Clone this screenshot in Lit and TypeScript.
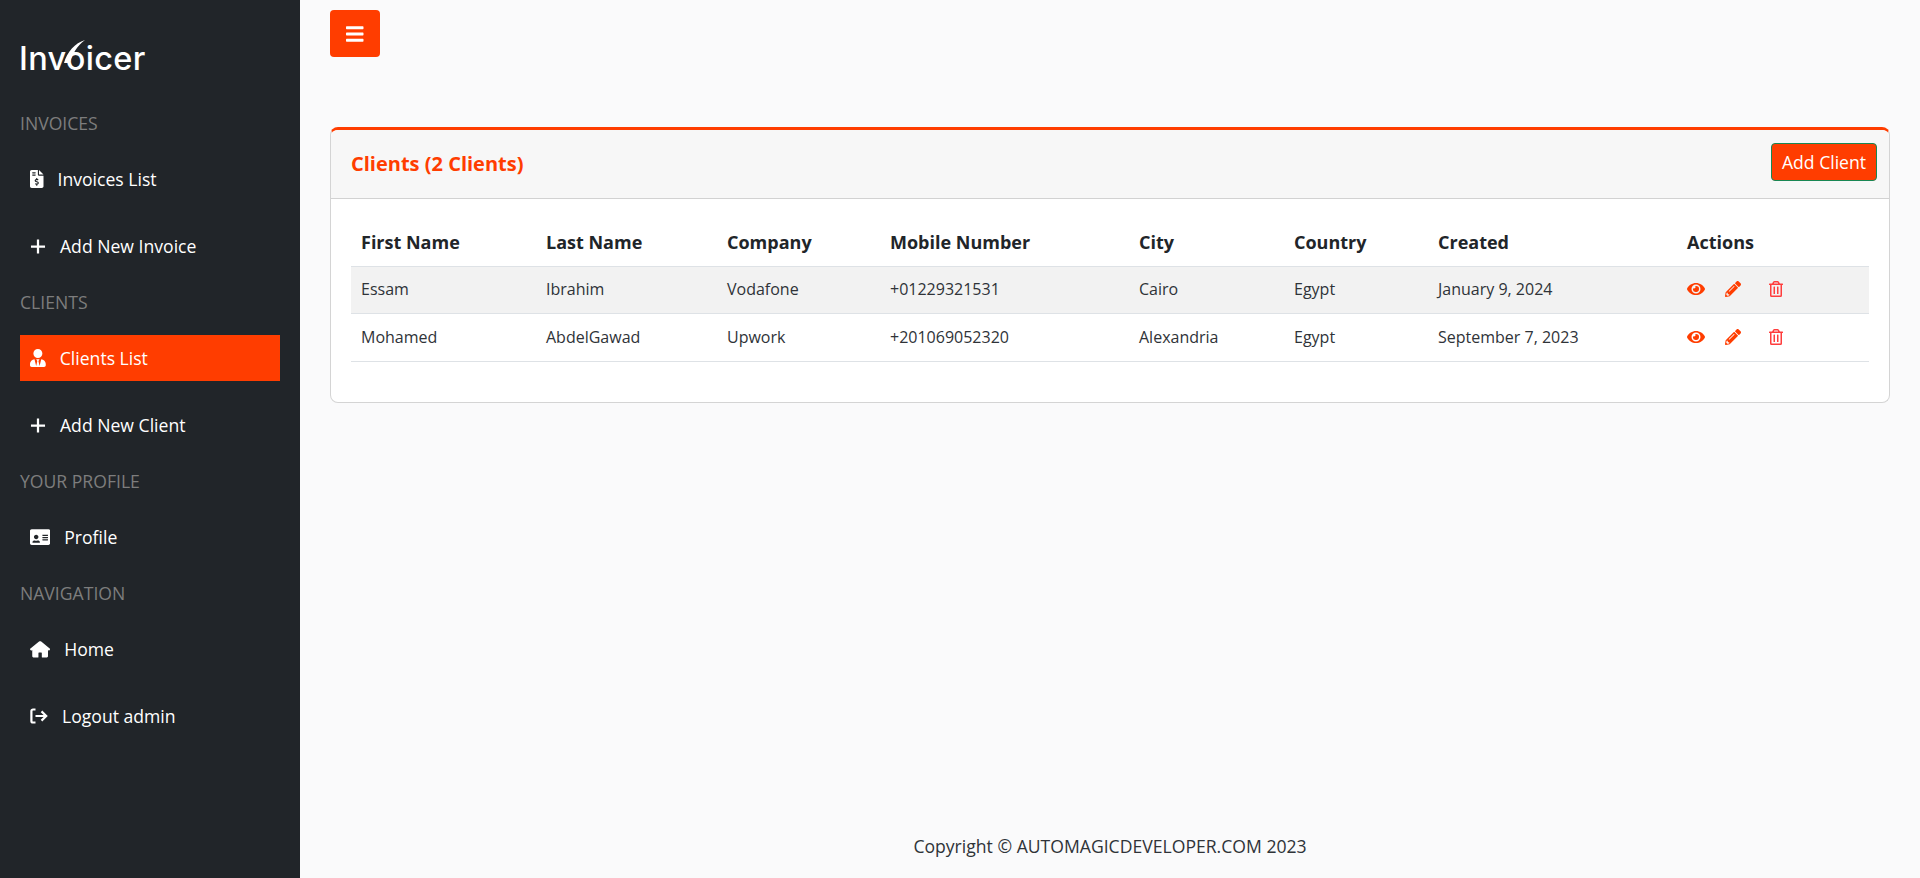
import { LitElement, html, css, svg } from 'lit';
import { customElement } from 'lit/decorators.js';

const ICONS = {
  invoice: { vb: '0 0 384 512', d: 'M48 0C21.5 0 0 21.500 0 48v416c0 26.500 21.500 48 48 48h288c26.500 0 48-21.500 48-48V160H248c-13.200 0-24-10.800-24-24V0H48zM256 0v128h128L256 0zM64 72c0-4.420 3.580-8 8-8h80c4.420 0 8 3.580 8 8v16c0 4.420-3.580 8-8 8H72c-4.420 0-8-3.580-8-8V72zM64 152v-16c0-4.420 3.580-8 8-8h80c4.420 0 8 3.580 8 8v16c0 4.420-3.580 8-8 8H72c-4.420 0-8-3.580-8-8zM208 415.880V440c0 4.420-3.580 8-8 8h-16c-4.420 0-8-3.580-8-8v-24.290c-11.290-.580-22.270-4.520-31.370-11.350-3.900-2.930-4.100-8.770-.570-12.140l11.750-11.210c2.770-2.640 6.890-2.760 10.130-.730 3.870 2.420 8.260 3.720 12.820 3.720h28.110c6.500 0 11.800-5.920 11.800-13.190 0-5.950-3.610-11.190-8.770-12.730l-45-13.500c-18.590-5.580-31.580-23.420-31.580-43.390 0-24.520 19.050-44.440 42.670-45.070V232c0-4.420 3.580-8 8-8h16c4.420 0 8 3.580 8 8v24.290c11.290.580 22.270 4.510 31.370 11.350 3.900 2.930 4.100 8.770.570 12.140l-11.750 11.210c-2.770 2.640-6.890 2.760-10.130.730-3.870-2.430-8.260-3.720-12.820-3.720h-28.110c-6.500 0-11.800 5.920-11.800 13.190 0 5.950 3.610 11.190 8.770 12.730l45 13.500c18.590 5.580 31.580 23.420 31.580 43.390 0 24.530-19.050 44.440-42.670 45.070z' },
  user: { vb: '0 0 448 512', d: 'M224 256c70.700 0 128-57.300 128-128S294.700 0 224 0 96 57.300 96 128s57.300 128 128 128zm95.800 32.600L272 480l-32-136 32-56h-96l32 56-32 136-47.800-191.400C56.900 292 0 350.300 0 422.400V464c0 26.500 21.500 48 48 48h352c26.500 0 48-21.500 48-48v-41.600c0-72.100-56.900-130.400-128.200-133.800z' },
  card: { vb: '0 0 576 512', d: 'M528 32H48C21.500 32 0 53.500 0 80v352c0 26.500 21.500 48 48 48h480c26.500 0 48-21.500 48-48V80c0-26.500-21.500-48-48-48zM352 200c0-4.400 3.600-8 8-8h144c4.400 0 8 3.600 8 8v16c0 4.400-3.600 8-8 8H360c-4.400 0-8-3.600-8-8v-16zM352 264c0-4.400 3.600-8 8-8h144c4.400 0 8 3.600 8 8v16c0 4.400-3.600 8-8 8H360c-4.400 0-8-3.600-8-8v-16zM352 328c0-4.400 3.600-8 8-8h144c4.400 0 8 3.600 8 8v16c0 4.400-3.600 8-8 8H360c-4.400 0-8-3.600-8-8v-16zM176 192c35.300 0 64 28.700 64 64s-28.700 64-64 64-64-28.700-64-64 28.700-64 64-64zM67.100 396.200C75.500 370.500 99.600 352 128 352h8.200c12.300 5.100 25.700 8 39.800 8s27.600-2.900 39.800-8h8.200c28.400 0 52.500 18.500 60.900 44.200 3.200 9.900-5.200 19.800-15.600 19.800H82.700c-10.400 0-18.800-10-15.600-19.800z' },
  home: { vb: '0 0 576 512', d: 'M288 32c-11 0-22 4-30.500 11L4.300 251.500a12 12 0 0 0-1.600 16.900l25.500 31c4 5 11.500 6 17 1.600L64 285V464a32 32 0 0 0 32 32h128a16 16 0 0 0 16-16V368a16 16 0 0 1 16-16h64a16 16 0 0 1 16 16v112a16 16 0 0 0 16 16h128a32 32 0 0 0 32-32V285l18.800 16c5.500 4.400 13 3.400 17-1.600l25.500-31a12 12 0 0 0-1.700-16.900L318.500 43C310 36 299 32 288 32z' },
  bars: { vb: '0 0 448 512', d: 'M16 132h416c8.837 0 16-7.163 16-16V76c0-8.837-7.163-16-16-16H16C7.163 60 0 67.163 0 76v40c0 8.837 7.163 16 16 16zm0 160h416c8.837 0 16-7.163 16-16v-40c0-8.837-7.163-16-16-16H16c-8.837 0-16 7.163-16 16v40c0 8.837 7.163 16 16 16zm0 160h416c8.837 0 16-7.163 16-16v-40c0-8.837-7.163-16-16-16H16c-8.837 0-16 7.163-16 16v40c0 8.837 7.163 16 16 16z' },
  eye: { vb: '0 0 576 512', d: 'M572.520 241.400C518.290 135.590 410.930 64 288 64S57.680 135.640 3.480 241.410a32.350 32.350 0 0 0 0 29.190C57.710 376.410 165.070 448 288 448s230.320-71.640 284.520-177.410a32.350 32.350 0 0 0 0-29.190zM288 400a144 144 0 1 1 144-144 143.930 143.930 0 0 1-144 144zm0-240a95.310 95.310 0 0 0-25.310 3.790 47.850 47.850 0 0 1-66.900 66.900A95.780 95.780 0 1 0 288 160z' },
  pencil: { vb: '0 0 512 512', d: 'M497.900 142.100l-46.100 46.100c-4.700 4.700-12.300 4.700-17 0l-111-111c-4.700-4.700-4.700-12.300 0-17l46.100-46.100c18.700-18.700 49.100-18.700 67.900 0l60.100 60.100c18.800 18.700 18.800 49.100 0 67.900zM284.200 99.800L21.600 362.400.4 483.900c-2.900 16.400 11.400 30.600 27.800 27.800l121.500-21.300 262.600-262.600c4.700-4.700 4.700-12.300 0-17l-111-111c-4.800-4.700-12.400-4.700-17.100 0zM124.100 339.900c-5.500-5.500-5.500-14.300 0-19.800l154-154c5.500-5.500 14.300-5.500 19.800 0s5.500 14.300 0 19.800l-154 154c-5.500 5.500-14.300 5.500-19.800 0zM88 424h48v36.300l-64.500 11.300-31.100-31.100L51.700 376H88v48z' },
  trash: { vb: '0 0 448 512', d: 'M268 416h24a12 12 0 0 0 12-12V188a12 12 0 0 0-12-12h-24a12 12 0 0 0-12 12v216a12 12 0 0 0 12 12zM432 80h-82.410l-34-56.700A48 48 0 0 0 274.410 0H173.590a48 48 0 0 0-41.160 23.300L98.410 80H16A16 16 0 0 0 0 96v16a16 16 0 0 0 16 16h16v336a48 48 0 0 0 48 48h288a48 48 0 0 0 48-48V128h16a16 16 0 0 0 16-16V96a16 16 0 0 0-16-16zM171.840 50.910A6 6 0 0 1 177 48h94a6 6 0 0 1 5.150 2.910L293.610 80H154.390zM368 464H80V128h288zm-212-48h24a12 12 0 0 0 12-12V188a12 12 0 0 0-12-12h-24a12 12 0 0 0-12 12v216a12 12 0 0 0 12 12z' },
};

type IconName = keyof typeof ICONS;

function icon(name: IconName, cls = '') {
  const i = ICONS[name];
  return html`<svg class="ico ${cls}" viewBox=${i.vb} fill="currentColor" fill-rule="evenodd" aria-hidden="true">${svg`<path d=${i.d}></path>`}</svg>`;
}

const plusIcon = html`<svg class="ico plus" viewBox="0 0 16 16" fill="none" stroke="currentColor" stroke-width="2.4"><path d="M8 .5v15M.5 8h15"></path></svg>`;
const logoutIcon = html`<svg class="ico logout" viewBox="0 0 18 18" fill="none" stroke="currentColor" stroke-width="2.2"><path d="M5.500 2.500H3a1.600 1.600 0 0 0-1.600 1.600v9.800A1.600 1.600 0 0 0 3 15.500h2.500"></path><path d="M5.500 9h10.800M11.500 4.400 16.200 9l-4.700 4.600"></path></svg>`;

const CLIENTS = [
  { first: 'Essam', last: 'Ibrahim', company: 'Vodafone', mobile: '+01229321531', city: 'Cairo', country: 'Egypt', created: 'January 9, 2024' },
  { first: 'Mohamed', last: 'AbdelGawad', company: 'Upwork', mobile: '+201069052320', city: 'Alexandria', country: 'Egypt', created: 'September 7, 2023' },
];

@customElement('app-root')
export class AppRoot extends LitElement {
  static styles = css`
    :host {
      display: block;
      font-family: 'Open Sans', sans-serif;
      color: #212529;
    }
    .layout { display: flex; min-height: 878px; background: #fafafb; }
    .sidebar {
      background: #212529;
      box-sizing: border-box;
      color: #fff;
      flex: 0 0 300px;
      padding: 0 20px;
    }
    .logo {
      box-sizing: border-box;
      color: #fff;
      font-family: 'Inter', sans-serif;
      font-size: 32.5px;
      font-weight: 500;
      height: 111px;
      letter-spacing: 0.3px;
      line-height: 39px;
      margin-left: -1px;
      padding-top: 39px;
      position: relative;
    }
    .swoosh { height: 26px; left: 41px; position: absolute; top: 39px; width: 26px; }
    .label {
      color: #7d7d7d;
      font-size: 17.6px;
      height: 24px;
      line-height: 24px;
      margin-bottom: 21px;
    }
    .item {
      align-items: center;
      box-sizing: border-box;
      display: flex;
      font-size: 17.6px;
      gap: 14px;
      height: 46px;
      margin-bottom: 21px;
      padding-left: 10px;
    }
    .item.active { background: #ff3d00; }
    .ico { display: block; height: 18px; flex: none; }
    .item .plus { height: 15px; width: 16px; }
    .item .logout { height: 18px; width: 18px; }
    .main {
      display: flex;
      flex: 1;
      flex-direction: column;
      min-width: 0;
      padding: 10px 30px 0;
    }
    .toggle {
      align-items: center;
      background: #ff3d00;
      border: none;
      border-radius: 4px;
      color: #fff;
      display: flex;
      height: 47px;
      justify-content: center;
      margin-bottom: 70px;
      padding: 0;
      width: 50px;
    }
    .toggle .ico { height: 20px; }
    .card {
      background: #fff;
      border: 1px solid #d4d4d4;
      border-top: 3px solid #ff3d00;
      border-radius: 8px;
    }
    .card-head {
      align-items: center;
      background: #f7f7f7;
      border-bottom: 1px solid #d2d2d2;
      border-radius: 8px 8px 0 0;
      display: flex;
      height: 68px;
      justify-content: space-between;
      padding: 0 12px 0 20px;
    }
    .card-head h2 {
      color: #ff3d00;
      font-size: 20px;
      font-weight: 700;
      margin: 0 0 2px;
    }
    .add {
      background: #ff3d00;
      border: 1px solid #198754;
      border-radius: 4px;
      color: #fff;
      font: 400 17.6px 'Open Sans', sans-serif;
      height: 38px;
      margin-bottom: 4px;
      padding: 0;
      width: 106px;
    }
    .card-body { padding: 19px 20px 40px; }
    table { border-collapse: collapse; font-size: 16px; table-layout: fixed; width: 100%; }
    th {
      border-bottom: 1px solid #dee2e6;
      box-sizing: border-box;
      font-size: 18px;
      font-weight: 700;
      height: 48px;
      padding: 0 10px;
      text-align: left;
    }
    td {
      border-bottom: 1px solid #dee2e6;
      box-sizing: border-box;
      color: #2f3338;
      height: 47.5px;
      padding: 0 10px 1px;
    }
    tbody tr:nth-child(odd) td { background: #f2f2f2; }
    th:nth-child(1) { width: 185px; }
    th:nth-child(2) { width: 181px; }
    th:nth-child(3) { width: 163px; }
    th:nth-child(4) { width: 249px; }
    th:nth-child(5) { width: 155px; }
    th:nth-child(6) { width: 144px; }
    th:nth-child(7) { width: 249px; }
    th:nth-child(8) { width: 192px; }
    .actions { align-items: center; display: flex; }
    .actions .ico { height: 16px; }
    .actions .eye { color: #ff3d00; margin-right: 20px; }
    .actions .pencil { color: #ff3d00; margin-right: 28px; }
    .actions .trash { color: #ff3d3d; }
    footer {
      color: #2f3338;
      font-size: 17.6px;
      line-height: 24px;
      margin-top: auto;
      padding-bottom: 20px;
      text-align: center;
    }
  `;

  private _item(ic: unknown, label: string, active = false) {
    return html`<div class="item ${active ? 'active' : ''}">${ic}<span>${label}</span></div>`;
  }

  render() {
    return html`
      <div class="layout">
        <aside class="sidebar">
          <div class="logo">Invoicer
            <svg class="swoosh" viewBox="0 0 26 26"><path d="M4 24C7 13 15 4 25 1 17 7 13 14 9.500 24z" fill="#fff"></path></svg>
          </div>
          <div class="label">INVOICES</div>
          ${this._item(icon('invoice'), 'Invoices List')}
          ${this._item(plusIcon, 'Add New Invoice')}
          <div class="label">CLIENTS</div>
          ${this._item(icon('user'), 'Clients List', true)}
          ${this._item(plusIcon, 'Add New Client')}
          <div class="label">YOUR PROFILE</div>
          ${this._item(icon('card'), 'Profile')}
          <div class="label">NAVIGATION</div>
          ${this._item(icon('home'), 'Home')}
          ${this._item(logoutIcon, 'Logout admin')}
        </aside>
        <main class="main">
          <button class="toggle">${icon('bars')}</button>
          <section class="card">
            <div class="card-head">
              <h2>Clients (2 Clients)</h2>
              <button class="add">Add Client</button>
            </div>
            <div class="card-body">
              <table>
                <thead>
                  <tr>
                    <th>First Name</th><th>Last Name</th><th>Company</th><th>Mobile Number</th>
                    <th>City</th><th>Country</th><th>Created</th><th>Actions</th>
                  </tr>
                </thead>
                <tbody>
                  ${CLIENTS.map(c => html`
                    <tr>
                      <td>${c.first}</td><td>${c.last}</td><td>${c.company}</td><td>${c.mobile}</td>
                      <td>${c.city}</td><td>${c.country}</td><td>${c.created}</td>
                      <td><div class="actions">${icon('eye', 'eye')}${icon('pencil', 'pencil')}${icon('trash', 'trash')}</div></td>
                    </tr>
                  `)}
                </tbody>
              </table>
            </div>
          </section>
          <footer>Copyright © AUTOMAGICDEVELOPER.COM 2023</footer>
        </main>
      </div>
    `;
  }
}
